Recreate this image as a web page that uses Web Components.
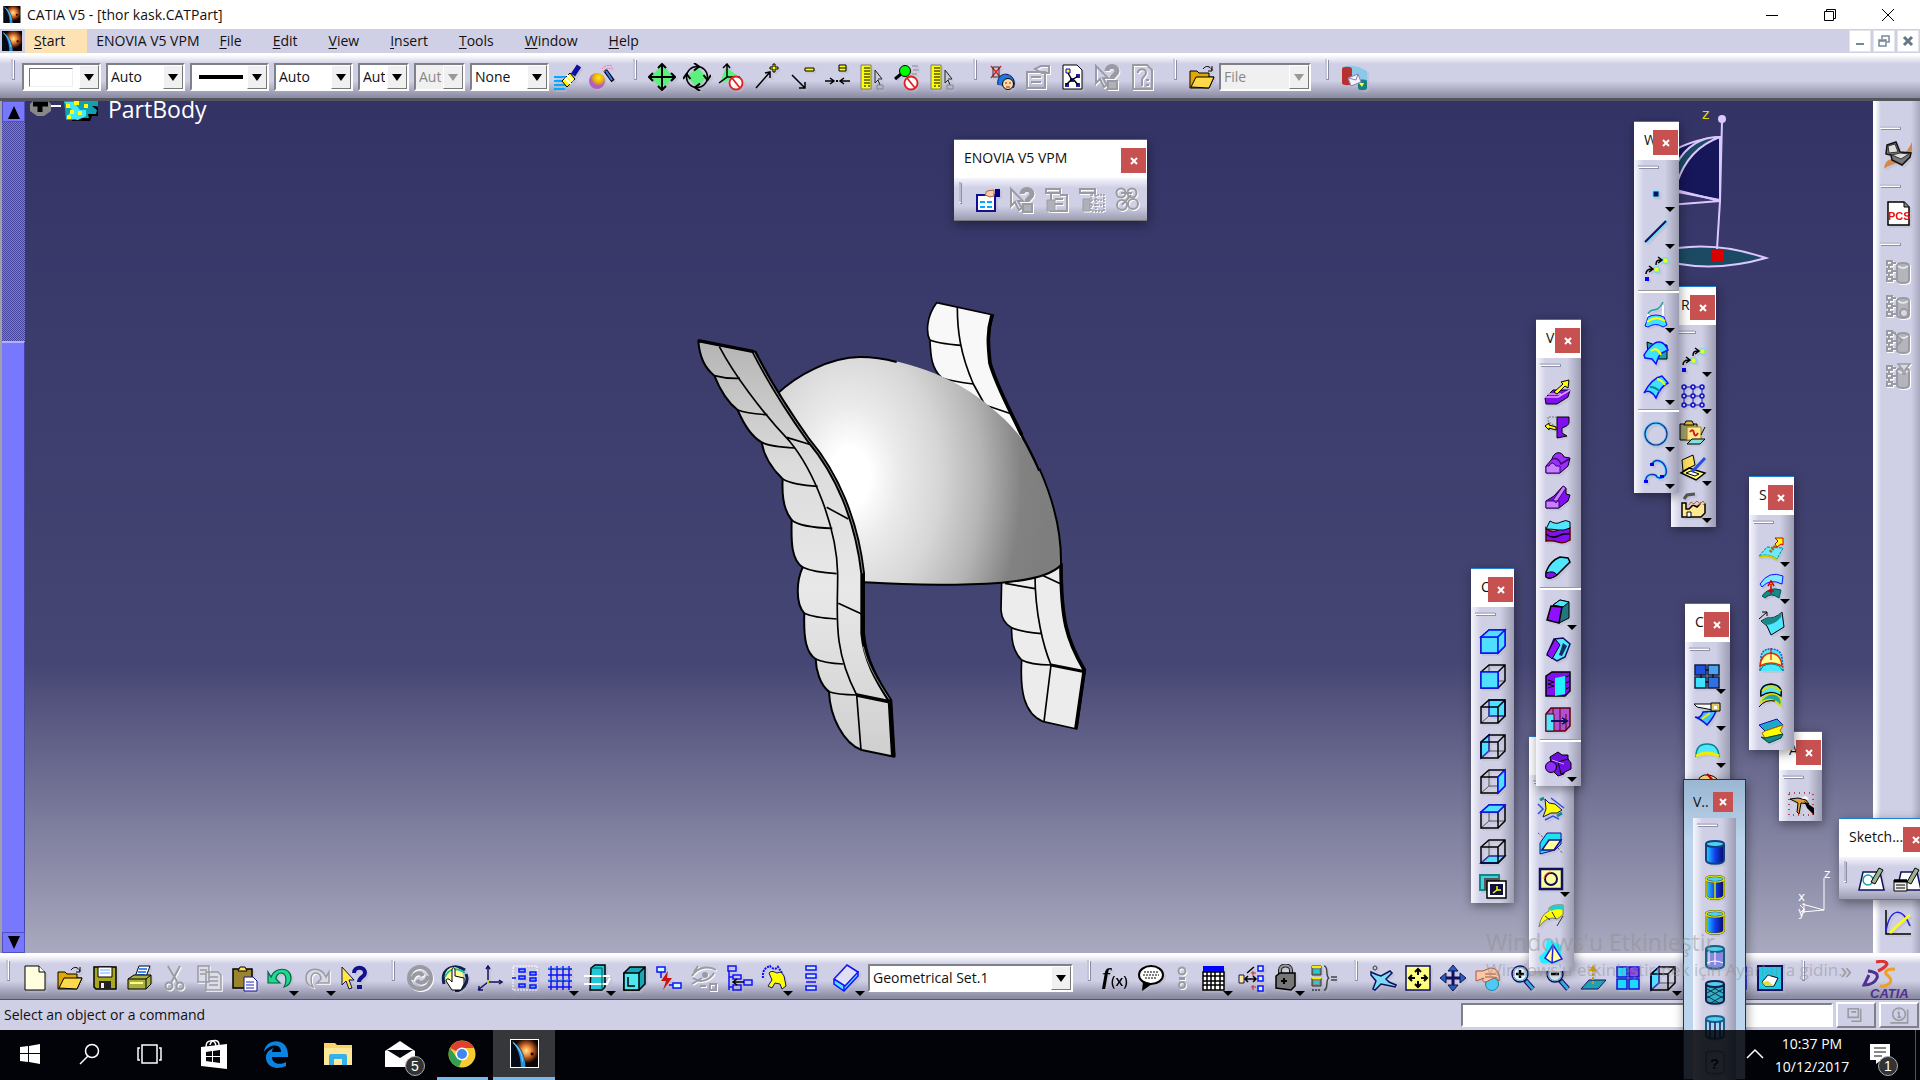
<!DOCTYPE html>
<html lang="en">
<head>
<meta charset="utf-8">
<title>CATIA V5 - [thor kask.CATPart]</title>
<style>
  html, body {
    margin: 0;
    height: 100%;
    overflow: hidden;
    background: #000;
    font: 14px/20px "Open Sans", "Noto Sans", sans-serif;
    color: #111;
  }
</style>
</head>
<body>
<cad-app></cad-app>

<script>
// ---------- Icons, all on a 28x28 grid ----------
const K = 'fill="none" stroke="#000" stroke-width="1.5"';
const B = 'stroke="#1010ff" stroke-width="1.5"';
const G = 'fill="none" stroke="#9a9aa2" stroke-width="2"';
const NO = '<circle cx="18" cy="20" r="6.5" fill="#fff" stroke="#e02020" stroke-width="1.8"/><path d="M14 15l8 10" stroke="#e02020" stroke-width="1.8"/>';

const FACES = {
  front: 'M2 10H19V26H2z',
  back: 'M10 3H26V19H10z',
  left: 'M2 10L10 3V19L2 26z',
  right: 'M19 10L26 3V19L19 26z',
  top: 'M2 10L10 3H26L19 10z',
  bottom: 'M2 26L10 19H26L19 26z',
};

function cube(...faces) {
  const wire = `<path d="M10 3V19H26M10 19L2 26" fill="none" stroke="#555"/><path d="M2 10H19V26H2zM2 10L10 3H26V19L19 26M19 10L26 3" ${K}/>`;
  const fills = faces.map(f => `<path d="${FACES[f]}" fill="#4fe0ff" ${B}/>`).join('');
  const hidden = ['back', 'left', 'bottom'].includes(faces[0]);
  return hidden ? fills + wire : wire + fills;
}

function cylinder(fill, line, extra = '') {
  return `<path d="M5 6V22C5 27 23 27 23 22V6" fill="${fill}" stroke="${line}" stroke-width="2"/>
    <ellipse cx="14" cy="6" rx="9" ry="3" fill="#4fd0f0" stroke="${line}" stroke-width="2"/>${extra}`;
}

const FOLDER = '<path d="M2 8H9L11 10H21V14H26L21 25H2z" fill="#e0a800" stroke="#000"/><path d="M3 24L8 14H26L21 25z" fill="#ffd94a" stroke="#000"/><path d="M15 6C18 2 22 3 24 7M24 3V8H20" fill="none" stroke="#000"/>';
const POINTS = `<path d="M3 23H7V27H3z" fill="#00f"/><path d="M12 13H17V18H12zM21 4H26V9H21z" fill="#ff0" stroke="#4fe0ff"/><path d="M4 20C4 16 6 15 10 15M7 12l4 3l-4 3M14 11C14 7 15 6 19 6M16 3l4 3l-4 3" fill="none" stroke="#000" stroke-width="1.5"/>`;
const RULER = '<path d="M3 2H13V26H3z" fill="#ff0" stroke="#777"/><path d="M6 5h6M6 8h6M6 11h6M6 14h6M6 17h6M6 20h6M6 23h2M10 23h2" stroke="#000"/><path d="M17 7V20L20 17L22 22M17 7L24 16H20" fill="none" stroke="#222"/><path d="M19 22h6v4h-6z" fill="none" stroke="#888"/>';
const LENS = '<path d="M16 16L24 25" stroke="#101060" stroke-width="5"/><path d="M17 17L24 25" stroke="#3ba8e0" stroke-width="3"/><circle cx="11" cy="10" r="8" fill="#e9fbff" stroke="#101060" stroke-width="1.5"/><circle cx="11" cy="10" r="6.5" fill="none" stroke="#5ad"/>';
const GEARTREE = `<path d="M3 4h5v4h-5zM3 12h5v4h-5zM3 20h5v4h-5zM8 6h4M8 14h4M8 22h4M5 8v4M5 16v4" ${G}/><path d="M13 9C13 5 25 5 25 9V23C25 27 13 27 13 23z" fill="#b4b4bc" stroke="#9a9aa2" stroke-width="2"/><path d="M14 9Q19 13 24 9" fill="none" stroke="#eee" stroke-width="1.5"/>`;

const ICONS = {
  brush: `<path d="M1 14H13M1 18H15M1 22H14M1 26H12" stroke="#0af" stroke-width="2"/><path d="M9 18L17 10L22 16L14 24z" fill="#ff0" stroke="#000"/><path d="M12 15l6 6M14 12l6 6" stroke="#fff" stroke-width="2"/><path d="M20 12L26 3" stroke="#1010a0" stroke-width="5"/>`,
  wand: `<circle cx="9" cy="18" r="8" fill="url(#orb)"/><path d="M17 7L25 18" stroke="#000" stroke-width="4"/><path d="M18 8L24 17" stroke="#4080ff" stroke-width="2"/><path d="M14 6Q18 1 25 3M16 9Q19 4 25 6" stroke="#f6a" stroke-dasharray="2 1" fill="none"/>`,
  move: `<path d="M14 2L26 14L14 26L2 14z" fill="#5cf07c"/><path d="M14 1V27M1 14H27M10 5L14 1L18 5M10 23L14 27L18 23M5 10L1 14L5 18M23 10L27 14L23 18" fill="none" stroke="#000" stroke-width="2"/>`,
  turn: `<path d="M14 4L24 14L14 24L4 14z" fill="#5cf07c"/><circle cx="14" cy="14" r="10.500" fill="none" stroke="#000" stroke-width="1.5"/><path d="M11 0l5 3.500l-5 4M17 28l-5-3.500l5-4M0 16l3.500-5l4 5M28 12l-3.500 5l-4-5" fill="none" stroke="#000" stroke-width="2"/>`,
  axisno: `<path d="M8 4L21 14L2 20z" fill="#5cf07c"/><path d="M9 1V14L1 20M9 14H22M5 5L9 1L12 5" ${K}/>${NO}`,
  plus: `<path d="M3 25L17 9M12 10l5-1l0 6" ${K}/><path d="M20 1h2v3h3v2h-3v3h-2v-3h-3v-2h3z" fill="#ff0" stroke="#000"/>`,
  minus: `<path d="M4 12L17 25M17 19v6h-6" ${K}/><path d="M17 5h9v3h-9z" fill="#ff0" stroke="#000"/>`,
  equal: `<path d="M2 18H11M7 15l4 3l-4 3M27 18H17M21 15l-4 3l4 3" ${K}/><path d="M13 17h2v2h-2z"/><path d="M16 2h7v6h-7z" fill="#ff0" stroke="#000"/><path d="M16 5h7" stroke="#000"/>`,
  ruler: RULER,
  lensno: `<path d="M2 16L8 11" stroke="#000" stroke-width="3"/><circle cx="12" cy="8" r="5.5" fill="#0f0" stroke="#000"/><path d="M19 3h6M20 7h6M19 11h5" stroke="#888"/>${NO}`,
  user: '<path d="M3 3L13 15M13 3L3 15" stroke="#e02020" stroke-width="1.5"/><path d="M5 4h6v10h-6z" fill="none" stroke="#333"/><path d="M10 22C8 12 18 8 24 14C27 18 27 22 25 25" fill="#1a7adf" stroke="#101060"/><circle cx="20" cy="21" r="5.5" fill="#ffd9a8" stroke="#000"/><path d="M18 19v2M22 19v2M18 24h4" stroke="#a02020"/>',
  props: `<path d="M4 9H22V25H4z" ${G}/><path d="M8 14H18M8 19H18M12 6L18 3H26V10H19z" ${G}/>`,
  propson: '<path d="M4 9H22V25H4z" fill="#fff" stroke="#101090" stroke-width="2"/><path d="M7 16h5M14 16h5M7 21h5M14 21h5" stroke="#0af" stroke-width="2"/><path d="M12 9L14 5L21 4V10L17 11z" fill="#fca" stroke="#a64"/><path d="M22 3h5v8h-5z" fill="#008"/>',
  docgraph: `<path d="M5 2H19L24 7V26H5z" fill="#fff" stroke="#000"/><path d="M8 6h4v4h-4z" fill="#ff0" stroke="#00f"/><path d="M12 15h4v4h-4zM18 11h4v4h-4zM18 20h4v4h-4zM7 20h4v4h-4z" fill="#22a"/><path d="M10 10L14 17L20 13M16 17L20 22M8 22L13 17" stroke="#000" stroke-width="1.5" fill="none"/>`,
  help: `<path d="M3 3V20L7 16L11 24L14 22L10 15H15z" ${G}/><path d="M14 8C14 2 24 2 24 8C24 12 19 12 19 16" fill="none" stroke="#9a9aa2" stroke-width="5"/><path d="M15 18h9v8h-9z" fill="#b0b0b8" stroke="#9a9aa2" stroke-width="2"/>`,
  docq: `<path d="M5 2H19L24 7V26H5z" ${G}/><path d="M10 10C10 5 18 5 18 10C18 13 14 14 14 17V23M18 17h3M18 22h3" ${G}/>`,
  folder: FOLDER,
  mail: '<path d="M2 4Q14 0 27 8V18H2z" fill="#8cc8e8"/><path d="M2 6C2 3 12 3 12 6V20C12 23 2 23 2 20z" fill="#b83030"/><path d="M18 18C18 16 27 16 27 18V25C27 28 18 28 18 25z" fill="#188080"/><path d="M8 15L18 11L21 19L11 23z" fill="#f4f4ff" stroke="#88a"/><path d="M8 15L16 17L18 11" fill="none" stroke="#88a"/><path d="M19 20h5l-2 4z" fill="#ff4"/>',
  docmgr: `<path d="M3 3H17V7H3zM8 7V25H24V9H17M12 13h8M12 18h8" ${G}/><path d="M4 14h8v11h-8z" fill="#b0b0b8" stroke="#9a9aa2"/>`,
  docset: `<path d="M2 3H17V7H2z" ${G}/><path d="M13 9H26V25H13zM13 14H26M13 19H26M18 9V25" fill="none" stroke="#9a9aa2" stroke-width="1.5" stroke-dasharray="2 1"/><path d="M5 13h7v12h-7z" fill="#b0b0b8" stroke="#9a9aa2"/>`,
  gears: `<circle cx="8" cy="7" r="4.5" ${G}/><circle cx="19" cy="7" r="4.5" ${G}/><circle cx="9" cy="19" r="5" ${G}/><circle cx="20" cy="18" r="5" ${G}/><path d="M8 7h11M9 19l9-10" ${G}/>`,

  new: '<path d="M4 2H18L24 8V26H4z" fill="#ffffe0" stroke="#000"/><path d="M18 2V8H24" fill="#fff" stroke="#000"/>',
  save: '<path d="M3 3H25V25H5L3 23z" fill="#a8a820" stroke="#000" stroke-width="1.5"/><path d="M7 3H21V13H7z" fill="#fff" stroke="#000"/><path d="M9 6h10M9 9h10" stroke="#6af"/><path d="M8 17H20V25H8z" fill="#222"/><path d="M10 19h3v5h-3z" fill="#eee"/>',
  print: '<path d="M9 13L13 2H24L20 13z" fill="#fff" stroke="#000"/><path d="M13 5h8M12 8h8M11 11h8" stroke="#06f" stroke-width="1.5"/><path d="M2 15L8 11H25V20L20 25H2z" fill="#a8b040" stroke="#000"/><path d="M2 15H20V25M20 15L25 11" fill="none" stroke="#000"/><path d="M4 19H17" stroke="#ff8" stroke-width="2"/>',
  cut: `<path d="M7 2L17 19M19 2L10 19" ${G}/><circle cx="8" cy="22" r="3.5" ${G}/><circle cx="19" cy="22" r="3.5" ${G}/>`,
  copy: `<path d="M2 2H13V18H2zM10 8H22L25 11V26H10z" fill="#dcdcea" stroke="#9a9aa2" stroke-width="1.5"/><path d="M4 6h7M4 10h5M13 13h9M13 17h9M13 21h9" stroke="#9a9aa2" stroke-width="1.5"/>`,
  paste: '<path d="M2 5H21V24H2z" fill="#9a8430" stroke="#000" stroke-width="1.5"/><path d="M7 7L9 3H14L16 7z" fill="#ffe060" stroke="#000"/><path d="M13 13H22L26 17V27H13z" fill="#fff" stroke="#101090"/><path d="M15 18h8M15 21h8M15 24h8" stroke="#22c"/>',
  undo: '<path d="M5 13C8 3 25 2 25 14C25 19 22 22 18 23C21 18 21 9 15 9C12 9 10 12 10 15L14 19H2V8z" fill="#20d890" stroke="#064" stroke-width="1.2"/>',
  redo: `<path d="M23 13C20 3 3 2 3 14C3 19 6 22 10 23C7 18 7 9 13 9C16 9 18 12 18 15L14 19H26V8z" fill="#d8d8e6" stroke="#9a9aa2" stroke-width="1.5"/>`,
  what: '<path d="M2 3V21L6 17L9 25L12 24L9 16H14z" fill="#ffe840" stroke="#101060"/><path d="M14 9C14 2 25 2 25 9C25 13 19 13 19 18" fill="none" stroke="#101090" stroke-width="4"/><path d="M17 21h5v4h-5z" fill="#101090"/>',
  update: `<circle cx="14" cy="14" r="11" fill="none" stroke="#9a9aa2" stroke-width="4"/><path d="M6 16C8 8 15 8 17 12M22 12C20 20 13 20 11 16" fill="none" stroke="#9a9aa2" stroke-width="4"/>`,
  hand: '<path d="M3 20C-1 4 14 -1 24 6M25 10C29 20 20 27 14 27" fill="none" stroke="#102050" stroke-width="3"/><circle cx="13" cy="12" r="9" fill="#ffff90"/><path d="M4 13C8 4 16 3 24 9" fill="none" stroke="#20c0a0" stroke-width="2"/><path d="M11 17V6C11 3 14 3 14 6V12L23 14V20L20 26H11L5 17C5 14 8 14 11 18z" fill="#fff" stroke="#000"/>',
  axis: '<path d="M12 2V18H26M12 18L2 26" fill="none" stroke="#101060" stroke-width="1.5"/><path d="M10 5l2-3l2 3M23 16l3 2l-3 2M3 22v4h4" fill="none" stroke="#101060" stroke-width="1.5"/><path d="M12 16v4" stroke="#cc3" stroke-width="2"/>',
  tree: `<path d="M2 2H26V26H2z" fill="none" stroke="#fff" stroke-dasharray="2 1"/><path d="M8 5h6v3h-6zM19 8h6v3h-6zM8 12h6v3h-6zM19 14h6v3h-6zM8 20h6v3h-6zM19 21h6v3h-6zM1 14h4" fill="#5ab8ff" ${B}/>`,
  grid: `<path d="M2 5H26M2 11H26M2 17H26M2 23H26M5 2V26M11 2V26M17 2V26M23 2V26" ${B}/><path d="M2 4H26M2 16H26" stroke="#2ab" stroke-dasharray="3 3"/>`,
  plane: '<path d="M8 4L12 1H22V23L19 26H7z" fill="#20c8d8" stroke="#000" stroke-width="1.5"/><path d="M1 12H27M1 20H24L27 14" fill="none" stroke="#fff" stroke-width="2"/><path d="M8 4H19V26" fill="none" stroke="#055"/>',
  block: '<path d="M4 9L10 3H25V20L19 26H4z" fill="#18a8b8" stroke="#000" stroke-width="1.5"/><path d="M4 9H19V26H4z" fill="#50e8f0" stroke="#000" stroke-width="1.5"/><path d="M19 9L25 3M8 13V22H15" fill="none" stroke="#000" stroke-width="1.5"/>',
  bolt: `<path d="M2 3h8v5h-8zM18 19h8v5h-8z" fill="#cff" ${B}/><path d="M6 8V14M14 21h4" ${B}/><path d="M13 7L6 17H11L8 26L17 14H12z" fill="#d01010"/>`,
  eye: `<path d="M2 12C8 2 20 2 26 6M3 14C10 20 20 16 24 9M4 8L8 2M2 20L12 14M10 22h6M20 20h6v6h-6z" ${G}/><circle cx="15" cy="11" r="3" fill="#9a9aa2"/>`,
  treeleft: `<path d="M3 2h8v5h-8zM8 11h8v4h-8zM19 16h8v5h-8zM8 21h8v5h-8zM4 7V26M4 13h4M4 23h4" fill="none" ${B}/><path d="M19 18H8M12 15l-4 3l4 3" ${K}/>`,
  body: `<path d="M3 14C2 4 8 3 10 2C13 6 17 5 18 3L22 9" fill="none" stroke="#1010ff" stroke-dasharray="2 1" stroke-width="2"/><path d="M9 9C12 6 14 8 17 9L21 8L24 12L26 22L22 25L20 20L15 19L12 24L8 22L12 16z" fill="#ff0" stroke="#101060"/>`,
  stack: `<path d="M9 2h10v4h-10zM9 10h10v4h-10zM9 22h10v4h-10z" fill="#c8f0ff" ${B}/><path d="M9 18h10" ${B}/>`,
  sheets: `<path d="M2 16V20L12 27L26 12V8z" fill="#5ae0ff" ${B}/><path d="M2 15L15 1L26 8L13 22z" fill="#e0e0f4" ${B}/><path d="M12 22V27" ${B}/>`,
  fx: '<text x="0" y="20" font-family="Liberation Serif" font-style="italic" font-weight="bold" font-size="24">f</text><text x="9" y="22" font-family="Open Sans" font-weight="600" font-size="14">(x)</text>',
  talk: '<ellipse cx="14" cy="11" rx="12" ry="9" fill="#fff" stroke="#000" stroke-width="2"/><path d="M6 17L5 27L15 20" fill="#000"/><path d="M7 8h14M6 11h16M8 14h12" stroke="#000" stroke-dasharray="2 1"/>',
  knot: `<circle cx="14" cy="7" r="3.500" ${G}/><circle cx="14" cy="21" r="3" ${G}/><path d="M11 13h6v3h-6z" fill="#9a9aa2"/>`,
  table: '<path d="M3 2H24V8H3z" fill="#00f"/><path d="M3 8H24V26H3z" fill="#fff"/><path d="M3 8H24V26H3zM3 12H24M3 17H24M3 21H24M7 8V26M11 8V26M15 8V26M20 8V26" fill="none" stroke="#000" stroke-width="1.5"/>',
  relate: `<path d="M2 11h5v8h-5z" fill="#ffe890" stroke="#101060"/><path d="M8 15H19M11 12l-3 3l3 3M16 12l3 3l-3 3M10 9L17 3" ${K}/><path d="M21 2h5v5h-5zM21 12h5v5h-5zM21 22h5v5h-5z" fill="#cff" ${B}/><path d="M14 9h5M16 7v5M14 23h5M16 21v5" stroke="#e02020"/>`,
  lock: '<path d="M8 12V6C8 0 19 0 19 6V12" fill="none" stroke="#222" stroke-width="4"/><path d="M8 12V6C8 0 19 0 19 6V12" fill="none" stroke="#999" stroke-width="2"/><path d="M4 12L8 9H23V22L19 26L4 24z" fill="#777" stroke="#000" stroke-width="1.5"/><path d="M12 14v6M9 17h6" stroke="#000" stroke-width="2"/>',
  equiv: '<path d="M3 2h9v9h-9zM3 14h9v8h-9z" fill="#888" stroke="#333"/><path d="M5 6h5v3h-5zM5 17h5v3h-5z" fill="#20d0d0"/><path d="M3 3h9M3 14h9" stroke="#ee0" stroke-width="2"/><path d="M3 26h8" stroke="#000" stroke-dasharray="2 1"/><path d="M15 2C20 2 16 13 20 14C16 15 20 26 15 26M22 13h6M22 16h6" fill="none" stroke="#444" stroke-width="1.5"/>',
  fly: '<path d="M2 8Q8 11 12 12L21 7L23 9L17 15L20 18L27 21L26 23L17 21L12 20L6 26L4 25L7 17L2 11z" fill="#7cdcf4" stroke="#101060" stroke-width="1.5"/><circle cx="6" cy="4" r="2" fill="none" stroke="#333"/>',
  fit: '<path d="M2 2H26V26H2z" fill="#ffff80" stroke="#101060" stroke-width="1.5"/><path d="M14 5V11M14 17V23M5 14H11M17 14H23M11 8l3-3l3 3M11 20l3 3l3-3M8 11l-3 3l3 3M20 11l3 3l-3 3" stroke="#000" stroke-width="2" fill="none"/>',
  pan: '<path d="M14 4V24M4 14H24" stroke="#101060" stroke-width="3"/><path d="M9 7L14 1L19 7zM9 21L14 27L19 21zM7 9L1 14L7 19zM21 9L27 14L21 19z" fill="#2b5eb8" stroke="#101060"/>',
  spin: '<circle cx="18" cy="20" r="6.5" fill="#50c8f8" stroke="#18a"/><path d="M2 7H9L16 4C24 4 26 10 25 17L22 13L12 18C8 18 8 16 10 14L2 17z" fill="#f8c8a8" stroke="#a54"/><path d="M11 10h11M11 13h9" stroke="#a54"/>',
  zoomin: LENS + '<path d="M7 10H15M11 6V14" stroke="#000" stroke-width="2.5"/>',
  zoomout: LENS + '<path d="M7 10H15" stroke="#000" stroke-width="2.5"/>',
  normal: '<path d="M2 25L10 16H27L19 25z" fill="#20a0b0" stroke="#101060"/><path d="M14 20V5" stroke="#c90" stroke-width="2" stroke-dasharray="3 1"/><path d="M10 7L14 1L18 7z" fill="#c90"/>',
  quad: '<path d="M3 3H13V13H3zM3 15H13V25H3zM15 15H25V25H15z" fill="#20d8ff" stroke="#1010d0" stroke-width="1.5"/><path d="M15 3H25V13H15z" fill="#8040e0" stroke="#1010d0" stroke-width="1.5"/>',
  iso: cube('left'),
  picture: '<path d="M2 2H26V26H2z" fill="#20c8e8" stroke="#101060" stroke-width="2"/><path d="M6 18L12 11L22 14L18 22H9z" fill="#fff" stroke="#000"/><path d="M6 18L12 17L18 22H9z" fill="#dd4"/>',

  pt: '<path d="M11 11h6v6h-6z" fill="#101060" stroke="#4fe0ff"/>',
  line: '<path d="M4 25L25 4" stroke="#4fe0ff" stroke-width="3"/><path d="M3 25L24 4" stroke="#101060" stroke-width="2"/>',
  points: POINTS,
  sweep: '<path d="M6 13C9 5 15 14 21 1" fill="none" stroke="#20a0a0" stroke-width="1.5"/><path d="M6 13v8M21 4v12" stroke="#fff" stroke-width="2"/><path d="M3 25L6 16Q14 12 22 16L25 24L21 26Q14 21 6 26z" fill="#40e0ff" stroke="#1010ff"/><path d="M5 21Q14 14 23 20" stroke="#ff0" stroke-width="2" fill="none"/>',
  trimsurf: '<path d="M5 4L13 7H25V21H17L6 18z" fill="#20a0a8" stroke="#000"/><path d="M2 17Q6 10 13 5Q21 1 26 12L20 15Q17 16 14 26L10 21L3 20z" fill="#40e0ff" stroke="#1010ff" stroke-width="1.5"/><path d="M9 13Q15 8 19 17" stroke="#ff0" stroke-width="2" fill="none"/>',
  loftsurf: '<path d="M2 20Q10 5 20 3L26 10Q18 14 14 25Q8 15 2 20z" fill="#40e0ff" stroke="#1010ff" stroke-width="1.5"/><path d="M8 14Q14 14 18 19" stroke="#188" stroke-width="2" fill="none"/><path d="M15 6Q20 7 23 12" stroke="#ff0" stroke-width="2" fill="none"/>',
  circle: '<circle cx="14" cy="14" r="11" fill="none" stroke="#6cf" stroke-width="3"/><circle cx="14" cy="14" r="11" fill="none" stroke="#203080" stroke-width="1.2"/>',
  spline: '<path d="M4 25C2 16 14 16 15 20C18 22 26 20 24 12C22 4 14 0 9 8" fill="none" stroke="#4fe0ff" stroke-width="3"/><path d="M4 25C2 16 14 16 15 20C18 22 26 20 24 12C22 4 14 0 9 8" fill="none" stroke="#2030c0" stroke-width="1.5"/><path d="M2 23h4v3h-4zM8 6h4v3h-4zM18 18h4v3h-4z" fill="#00f"/>',
  pattern: `<path d="M3 5H25M3 14H25M3 23H25M5 3V25M14 3V25M23 3V25" stroke="#1010c0"/><g fill="#ccf" stroke="#1010c0" stroke-width="1.5"><circle cx="5" cy="5" r="2"/><circle cx="14" cy="5" r="2"/><circle cx="23" cy="5" r="2"/><circle cx="5" cy="14" r="2"/><circle cx="14" cy="14" r="2"/><circle cx="23" cy="14" r="2"/><circle cx="5" cy="23" r="2"/><circle cx="14" cy="23" r="2"/><circle cx="23" cy="23" r="2"/></g>`,
  catalog: '<path d="M1 5H18V21H1z" fill="#a0a070" stroke="#000"/><path d="M5 6L7 2H13L15 6z" fill="#e0c040" stroke="#000"/><path d="M8 8H22V21H8z" fill="#ffe890" stroke="#a80"/><path d="M11 13Q14 9 15 14T19 14" stroke="#d02020" stroke-width="2" fill="none"/><path d="M8 25L13 20H26L21 25zM22 16L26 8" fill="#80e0e0" stroke="#000"/>',
  mould: '<path d="M3 6L14 1L16 11L4 17z" fill="#ffe060" stroke="#000"/><path d="M2 19L10 14L26 19L17 26z" fill="#ffff70" stroke="#000" stroke-width="1.5"/><path d="M7 19L12 17L20 20L16 22z" fill="#fff" stroke="#000"/><path d="M13 18L26 4" stroke="#2050e0" stroke-width="3"/>',
  factory: '<path d="M3 26V12H7V18H10L14 14L18 16L22 12L26 13V22L22 26z" fill="#ffe890" stroke="#000" stroke-width="1.5"/><path d="M10 14L12 11L15 13L18 10L21 13L24 10L26 13" fill="#fca" stroke="#a64"/><path d="M5 8L8 4L16 3" stroke="#555" stroke-width="3" fill="none"/><path d="M8 21h4v5h-4z" fill="#fff" stroke="#000"/>',

  pad: '<path d="M1 20L9 12H26L24 19L13 26H2z" fill="#8010f0" stroke="#000"/><path d="M1 19H14L26 12M3 16H17" fill="none" stroke="#e0a0ff" stroke-width="1.5"/><path d="M10 14L19 6L17 4L25 2L24 10L21 8L13 16z" fill="#ff0" stroke="#000"/>',
  shaft: '<path d="M13 4H25V9C25 13 20 14 18 15V20L23 23L13 25z" fill="#8010f0" stroke="#000"/><path d="M13 4H4V8L12 14" fill="none" stroke="#777" stroke-dasharray="2 1"/><path d="M1 13L5 10V12L12 14V17L5 15V17z" fill="#ff0" stroke="#000"/>',
  rib: '<path d="M2 18L8 11C10 3 18 3 20 9L26 10L24 18L16 25H2z" fill="#9a30f8" stroke="#000"/><path d="M2 18H5Q8 12 12 18H16V25H2z" fill="#c880ff" stroke="#400080"/><path d="M8 11Q14 9 17 16L25 11" fill="none" stroke="#400080" stroke-width="1.5"/>',
  stiff: '<path d="M2 18L10 13L19 3L22 5V11L26 12L24 18L15 25H2z" fill="#8010f0" stroke="#000"/><path d="M2 18H15V25H2zM9 17L19 3L22 5L12 20z" fill="#c880ff" stroke="#400080"/>',
  thick: '<path d="M2 10Q8 16 14 12T26 10V22Q20 26 14 24T2 23z" fill="#8010f0" stroke="#600000" stroke-width="1.5"/><path d="M2 16Q8 21 14 18T26 16" fill="none" stroke="#000" stroke-width="1.5"/><path d="M2 11L6 3Q12 7 17 4T26 4V10Q20 13 14 12T2 11z" fill="#4fe6ff" stroke="#000"/>',
  closesurf: '<path d="M2 19Q6 8 16 4L24 5L26 9L13 22Q6 27 2 24z" fill="#4fe6ff" stroke="#000" stroke-width="1.5"/><path d="M2 20Q10 17 13 22Q6 27 2 24z" fill="#8010f0" stroke="#000"/>',
  draft: '<path d="M9 7L16 2L25 4V20L15 25z" fill="#207880" stroke="#000"/><path d="M9 7L16 2L25 4L19 9z" fill="#4fe6ff" stroke="#000"/><path d="M7 8L18 9L15 25L3 22z" fill="#9010ff" stroke="#000" stroke-width="1.5"/>',
  shell: '<path d="M10 4L19 3L26 9L21 22L13 26L3 20z" fill="#4fe6ff" stroke="#101060" stroke-width="1.5"/><path d="M3 19L11 4L16 10L8 24z" fill="#9010ff" stroke="#000"/><path d="M15 20L19 8L23 11L18 21z" fill="#103060"/>',
  thickness: '<path d="M2 6L8 2H26V21L21 26H2z" fill="#8010f0" stroke="#000" stroke-width="1.5"/><path d="M11 8L21 6V24L11 26z" fill="#20f0ff"/><path d="M4 10l6 2l-6 2l6 2l-6 2M22 7l4-2M22 13l4-2M22 19l4-2" stroke="#000" fill="none"/>',
  mirror: '<path d="M2 9L7 3H26V21L21 26H2z" fill="#b050d8" stroke="#600000" stroke-width="1.5"/><path d="M2 9H10V26H2z" fill="#4fe6ff" stroke="#600000"/><path d="M9 9V3M16 9V3M16 9V26M22 9V26" stroke="#600000"/><path d="M7 16H22M18 13l5 3l-5 3" stroke="#101060" stroke-width="2" fill="#fff"/>',
  bool: '<path d="M6 7L14 2L18 5H24V12L20 15V24L14 26L8 20z" fill="#7010e0" stroke="#000"/><circle cx="7" cy="17" r="5.5" fill="#9030ff" stroke="#000"/><path d="M14 12L24 9L27 13V19L17 24z" fill="#7010e0" stroke="#000"/><path d="M8 10L20 14" stroke="#d0a0ff"/>',

  views: '<path d="M1 3H20V18H1z" fill="#40d0e0" stroke="#188" stroke-width="2"/><path d="M5 6H20V18H5z" fill="#555"/><path d="M8 9H27V26H8z" fill="#fff" stroke="#000" stroke-width="1.5"/><path d="M11 12H24V23H11z" fill="#101040"/><path d="M18 14v4h4M18 18l-4 3" stroke="#ff0" stroke-width="1.5" fill="none"/>',
  starsurf: '<path d="M8 4L12 8L18 9L25 15L20 18H14L6 22L9 14z" fill="#ff0" stroke="#101060"/><path d="M1 9L6 14L1 19M14 3L27 13M8 25L16 21L22 24" stroke="#3050e0" stroke-width="1.5" fill="none"/><path d="M3 5L7 3M20 21L25 18" stroke="#188888" stroke-width="3"/>',
  boxsurf: '<path d="M10 3L24 3V14L18 20L3 24V13z" fill="#20e0f0" stroke="#101090"/><path d="M5 20L12 10H24L17 20z" fill="#ffffa0" stroke="#101090" stroke-width="1.5"/><path d="M1 3l6 5M21 18l5 6" stroke="#555" stroke-dasharray="2 2"/>',
  sketchpad: '<path d="M3 4H25V24H3z" fill="#ffffa0" stroke="#101060" stroke-width="2.5"/><circle cx="14" cy="14" r="6" fill="none" stroke="#101060" stroke-width="2"/><path d="M7 14A7 7 0 0 1 14 7" stroke="#f60" fill="none"/>',
  yellowsurf: '<path d="M12 6Q16 2 26 3V13L20 17Q10 13 2 25Q4 12 12 9z" fill="#ff0" stroke="#777"/><path d="M12 6Q18 2 26 3V8Q20 6 14 9z" fill="#20d0d0"/><path d="M15 10L19 17M8 14l5 4M20 24l6-10" stroke="#333"/>',
  facet: '<path d="M10 2L24 8V20L20 26H4L2 20L8 14z" fill="#20f0ff"/><path d="M8 21L16 8L25 22L15 26z" fill="#ffffa0" stroke="#2020e0" stroke-width="1.5"/><path d="M16 8L15 26" stroke="#2020e0" stroke-width="1.5"/>',

  extrude: '<path d="M2 21L10 12L26 13L20 24Q12 18 2 21z" fill="#70e8f8" stroke="#088" stroke-dasharray="3 1"/><path d="M2 22Q12 19 20 25" fill="none" stroke="#cc0" stroke-width="2"/><path d="M13 17L20 9" stroke="#a60" stroke-width="3" stroke-dasharray="2 1"/><path d="M18 3H26V10L24 9L20 12L18 9L21 6z" fill="#ff0" stroke="#c00"/>',
  offset: '<path d="M3 12Q12 -2 26 4L25 12Q13 6 5 15z" fill="#80e8ff" stroke="#1010ff"/><path d="M5 24Q12 14 24 18L22 26Q14 20 8 26z" fill="#188888" stroke="#055"/><path d="M14 22V12M11 14l3-5l3 5M11 19h6" stroke="#c00" stroke-width="1.5" fill="#ff0"/>',
  sweep2: '<path d="M2 10L10 3M5 3h5v4" stroke="#000" fill="none"/><path d="M4 12L10 9Q18 10 25 3L27 18L14 26L10 17z" fill="#4fe6ff" stroke="#000"/><path d="M4 12L10 9Q18 10 25 3L24 8Q18 16 9 16z" fill="#188888"/>',
  fill: '<path d="M4 12Q4 3 14 3T25 12L26 24H3z" fill="#4fe6ff" stroke="#1060c0" stroke-dasharray="2 1" stroke-width="1.5"/><path d="M3 20Q4 8 14 7Q24 8 25 20Q14 14 3 20z" fill="#ffff90" stroke="#e03000" stroke-width="1.5"/><path d="M14 2v12" stroke="#c00"/><path d="M3 25L6 20Q14 16 22 20L26 25" fill="#4fe6ff" stroke="#088"/>',
  multi: '<path d="M4 15Q2 4 14 3Q26 4 24 15Q14 8 4 15z" fill="#4fe6ff" stroke="#000" stroke-width="1.5"/><path d="M5 10Q14 2 24 10" stroke="#dd0" stroke-width="2" fill="none"/><path d="M3 22Q8 12 17 13Q26 15 24 25Q14 14 3 22z" fill="#20a8a8" stroke="#dd0" stroke-width="1.5"/><path d="M2 26Q8 18 18 20" stroke="#000" fill="none"/>',
  blend: '<path d="M2 9L20 3L26 9L8 15z" fill="#20a8c8" stroke="#1010a0"/><path d="M8 15L26 9L23 15L26 18L8 22L5 17z" fill="#ff0" stroke="#a60"/><path d="M4 21L8 22L26 18L24 22L12 27z" fill="#188888" stroke="#044"/>',
  puzzle: '<path d="M2 3H13V13H2z" fill="#2050e0"/><path d="M15 3H26V13H15z" fill="#50a0f0"/><path d="M2 15H13V26H2z" fill="#40e0ff"/><path d="M15 15H26V26H15z" fill="#3070e0"/><path d="M2 3H13V13H2zM15 3H26V13H15zM2 15H13V26H2zM15 15H26V26H15z" fill="none" stroke="#102040" stroke-width="1.5"/><path d="M12 8h4M8 12v4M20 12v4M12 20h4" stroke="#102040" stroke-width="2"/>',
  saw: '<path d="M2 18Q8 20 10 13L23 12Q21 18 14 26Q8 20 2 18z" fill="#40c0ff" stroke="#1010d0" stroke-width="1.5"/><path d="M9 20L17 14" stroke="#ee0" stroke-width="2"/><path d="M1 5H20V11L4 8z" fill="#fff" stroke="#000"/><path d="M18 4H27V12H18z" fill="#e0c860" stroke="#000"/><path d="M21 7h3v3h-3z" fill="#fff"/>',
  edge: '<path d="M3 20Q3 8 14 8T26 20Q14 14 3 20z" fill="#4fe6ff" stroke="#088" stroke-width="1.5"/><path d="M3 20Q14 14 26 20" stroke="#ee0" stroke-width="3" fill="none"/>',
  dome: '<path d="M3 14Q5 0 16 2T26 14z" fill="#ffe080" stroke="#000"/><path d="M14 1L26 14" stroke="#c00" stroke-width="2"/>',
  analyse: '<path d="M2 3H26V25H2z" fill="none" stroke="#c04040" stroke-width="2" stroke-dasharray="1 4"/><path d="M3 9L11 8L19 10L22 14L14 13L12 24L10 22L11 13z" stroke="#000" fill="#dca040"/><path d="M17 11L27 18V25L20 18z" fill="#000"/><path d="M14 8l5-2l3 4" fill="#fff"/>',
  sketch: '<path d="M5 7H22L26 25H1z" fill="#fff" stroke="#101060" stroke-width="1.5"/><circle cx="10" cy="15" r="5" fill="none" stroke="#18a0a0" stroke-width="1.5"/><path d="M13 17L21 3L25 5L17 19z" fill="#9ab090" stroke="#000"/>',
  sketchpos: '<path d="M8 7H24L28 25H4z" fill="#fff" stroke="#101060" stroke-width="1.5"/><path d="M14 17L22 3L26 5L18 19z" fill="#9ab090" stroke="#000"/><path d="M1 15H14V26H1z" fill="#eee" stroke="#000"/><path d="M1 16h13" stroke="#000" stroke-width="3"/><path d="M3 20h9M3 23h9" stroke="#000"/>',

  robot: '<path d="M0 28Q1 17 10 18T28 1Q30 18 17 21T0 28z" fill="#d08850"/><path d="M3 4L12 1L16 11L27 12L26 16L18 24L8 19L7 14L2 13z" fill="#777" stroke="#111" stroke-width="1.5"/><path d="M4 5L11 3L14 11L5 12zM8 14L16 12L25 13L17 18z" fill="#ddd" stroke="#333"/>',
  pcs: '<path d="M4 3H20L25 8V26H4z" fill="#fff" stroke="#000" stroke-width="1.5"/><path d="M20 3V8H25" fill="#888" stroke="#000"/><text x="4" y="21" font-size="11" font-weight="bold" fill="#e81010" font-family="Liberation Sans">PCS</text>',
  geara: GEARTREE,
  gearb: GEARTREE + `<circle cx="20" cy="21" r="4" fill="#d8d8e6" stroke="#9a9aa2" stroke-width="2"/>`,
  gearc: GEARTREE + `<path d="M8 4L18 13L12 20" ${G}/>`,
  geard: GEARTREE + `<path d="M14 2H26L21 8V12H19V8z" fill="#d8d8e6" stroke="#9a9aa2" stroke-width="1.5"/>`,
  curve: '<path d="M2 2V26H27" fill="none" stroke="#000" stroke-width="1.5"/><path d="M2 23C6 0 18 -2 26 18" fill="none" stroke="#2020e0" stroke-width="1.5"/><path d="M6 25L14 17L26 7" fill="none" stroke="#ff0" stroke-width="2.5"/>',
  screen: `<path d="M4 6H17V17H4zM8 10h6M20 6V22H8" fill="none" stroke="#9a9aa2" stroke-width="2"/>`,
  info: `<circle cx="14" cy="13" r="8" ${G}/><path d="M12 11h2v6M12 17h5M14 7v1M3 24H25V7" ${G}/>`,
  cyl: cylinder('url(#shade)', '#104080'),
  cyledge: cylinder('url(#shade)', '#101040', '<path d="M5 6V22C5 27 23 27 23 22V6M14 9V25" fill="none" stroke="#dd0" stroke-width="1.5"/><ellipse cx="14" cy="6" rx="9" ry="3" fill="none" stroke="#dd0" stroke-width="1.5"/>'),
  cyltop: cylinder('url(#shade)', '#101040', '<path d="M5 6V22C5 27 23 27 23 22V6" fill="none" stroke="#dd0" stroke-width="1.5"/><ellipse cx="14" cy="6" rx="9" ry="3" fill="none" stroke="#dd0" stroke-width="1.5"/>'),
  cylmat: cylinder('#8888e0', '#186080', '<path d="M8 8V22M14 9V22M6 20Q14 16 22 20" fill="none" stroke="#fff"/>'),
  cylmesh: cylinder('#30b0c0', '#102050', '<path d="M6 11L22 20M6 18L18 25M11 9L22 15M22 11L6 20M22 18L10 25M17 9L6 15" stroke="#103050" fill="none"/>'),
  cylwire: cylinder('#a8d8f0', '#186090', '<path d="M9 9V24M14 9V25M19 9V24" stroke="#102060" stroke-width="1.5"/>'),
  cylask: '<path d="M5 6V22C5 27 23 27 23 22V6C23 2 5 2 5 6z" fill="none" stroke="#888" stroke-width="1.5"/><text x="9" y="21" font-size="15" font-weight="bold" font-family="Liberation Sans" fill="#111">?</text>',
};
for (const face of Object.keys(FACES)) ICONS['cube-' + face] = cube(face);
ICONS['cube-iso'] = cube('front', 'top', 'right');

const GRADIENTS = `<defs>
  <radialGradient id="orb" cx=".6" cy=".3"><stop offset="0" stop-color="#ffe820"/><stop offset=".6" stop-color="#e8b000"/><stop offset="1" stop-color="#b060c0"/></radialGradient>
  <linearGradient id="shade"><stop offset="0" stop-color="#20d8ff"/><stop offset=".5" stop-color="#1040f0"/><stop offset="1" stop-color="#080860"/></linearGradient>
</defs>`;

function svg(name, size = 28) {
  return `<svg viewBox="0 0 28 28" width="${size}" height="${size}" aria-hidden="true">${GRADIENTS}${ICONS[name]}</svg>`;
}

const APP_ICON = `<svg viewBox="0 0 30 30" width="100%" height="100%" aria-hidden="true" style="display:block">
  <defs><radialGradient id="sun" gradientUnits="userSpaceOnUse" cx="17" cy="12" r="14"><stop offset="0" stop-color="#ffe890"/><stop offset=".35" stop-color="#f09040"/><stop offset=".7" stop-color="#8a3c14"/><stop offset="1" stop-color="#0c0504"/></radialGradient></defs>
  <path d="M0 0H30V30H0z" fill="url(#sun)"/>
  <path d="M0 0C10 6 16 16 16 30H0z" fill="#050a14"/>
  <path d="M1 1C11 7 16 18 16 30H11C11 18 7 8 1 1z" fill="#2a90d8"/>
  <path d="M2 3C10 9 12 16 13 24" fill="none" stroke="#8fd8ff"/>
  <path d="M22 14h3v3h-3z" fill="#200"/>
</svg>`;

// "name" is a tool, "name>" has a fly-out, "name!" is disabled, "name~" is narrow,
// "|" is a handle, "-" is a rule
function tools(spec) {
  return spec.split(' ').map(token => {
    if (token === '|') return '<tool-handle></tool-handle>';
    if (token === '-') return '<tool-rule></tool-rule>';
    const name = token.replace(/[>!~]/g, '');
    const arrow = token.includes('>') ? ' arrow' : '';
    const off = token.includes('!') ? ' disabled' : '';
    const narrow = token.includes('~') ? ' narrow' : '';
    return `<tool-button icon="${name}"${arrow}${off}${narrow}></tool-button>`;
  }).join('');
}

class Part extends HTMLElement {
  connectedCallback() {
    if (this.shadowRoot) return;
    this.attachShadow({ mode: 'open' });
    this.shadowRoot.innerHTML = this.template();
  }
}

class ToolButton extends Part {
  template() {
    return `
      <style>
        :host { display: grid; flex: none; grid-template: 35px / 35px; position: relative; width: 35px; height: 35px; }
        :host([arrow]) { width: 37px; height: 37px; }
        :host([narrow]) { grid-template-columns: 28px; width: 28px; }
        button { display: grid; place-items: center; padding: 0; border: 0; background: none; }
        svg { filter: drop-shadow(2px 2px 0 #b9b9cc88); }
        button:disabled svg { filter: drop-shadow(1px 1px 0 #fff); }
        .fly { position: absolute; right: 0; bottom: 1px; border: 5px solid transparent; border-top-color: #000; border-bottom: 0; }
      </style>
      <button aria-label="${this.getAttribute('icon')}" ${this.hasAttribute('disabled') ? 'disabled' : ''}>${svg(this.getAttribute('icon'))}</button>
      ${this.hasAttribute('arrow') ? '<span class="fly"></span>' : ''}`;
  }
}

class ToolHandle extends Part {
  template() {
    return `
      <style>
        :host { display: block; flex: none; width: 25px; }
        i { display: block; width: 2px; height: 20px; margin-left: 14px; border: solid #fff; border-width: 0 1px 0 0; background: #c4c4d8; box-shadow: 1px 1px 0 #8c8ca4; }
        :host([across]) { width: auto; height: 11px; }
        :host([across]) i { width: 20px; height: 2px; margin-left: 0; border-width: 0 0 1px; }
      </style><i></i>`;
  }
}

class ToolRule extends Part {
  template() {
    return `
      <style>
        :host { display: block; flex: none; height: 2px; width: 41px; margin: 3px 0 4px; border-top: 1px solid #999; background: #fff; }
      </style>`;
  }
}

class ComboBox extends Part {
  template() {
    const kind = this.getAttribute('kind') || '';
    return `
      <style>
        :host { display: grid; flex: none; grid-template: 24px / 1fr 20px; border: 2px solid; border-color: #808088 #fff #fff #808088; background: #fff; }
        select { grid-area: 1 / 1 / 2 / 3; min-width: 0; margin: 0; padding: 0 22px 0 3px; border: 0; border-radius: 0; outline: 0; appearance: none; background: none; font: inherit; color: #111; opacity: 1; }
        .drop { grid-area: 1 / 2; display: grid; place-items: center; border: 1px solid; border-color: #fff #777 #777 #fff; background: #f0f0f0; pointer-events: none; }
        .drop::after { content: ""; border: 5px solid transparent; border-top: 7px solid #000; border-bottom: 0; }
        .preview { grid-area: 1 / 1; align-self: center; pointer-events: none; }
        .swatch { height: 17px; margin: 0 6px 0 5px; border: 1px solid; border-color: #777 #eee #eee #777; }
        .line { height: 4px; margin: 0 4px 0 7px; background: #000; }
        :host([disabled]) { background: #f0f0f0; }
        :host([disabled]) select { color: #888; }
        :host([disabled]) .drop::after { border-top-color: #999; }
      </style>
      <select aria-label="${this.getAttribute('label')}" ${this.hasAttribute('disabled') ? 'disabled' : ''}><option>${this.getAttribute('value') || ''}</option></select>
      ${kind ? `<span class="preview ${kind}"></span>` : ''}
      <span class="drop"></span>`;
  }
}

class TitleBar extends Part {
  template() {
    return `
      <style>
        :host { display: flex; flex: none; align-items: center; height: 29px; padding: 0 3px; background: #fff; font-size: 14px; }
        .app { width: 18px; height: 17px; margin-right: 6px; }
        .space { flex: 1; }
        button { width: 58px; height: 29px; padding: 0; border: 0; background: none; }
        svg { display: block; margin: auto; }
      </style>
      <span class="app">${APP_ICON}</span>
      <span>CATIA V5 - [thor kask.CATPart]</span>
      <span class="space"></span>
      <button aria-label="Minimize"><svg width="12" height="12"><path d="M0 6.500H12" stroke="#000"/></svg></button>
      <button aria-label="Restore"><svg width="12" height="12"><path d="M2.500 2V.5H11.500V9.500H10M.5 2.500H9.500V11.500H.5z" fill="none" stroke="#000"/></svg></button>
      <button aria-label="Close"><svg width="12" height="12"><path d="M0 0L12 12M12 0L0 12" stroke="#000"/></svg></button>`;
  }
}

class MenuBar extends Part {
  template() {
    const items = ['File', 'Edit', 'View', 'Insert', 'Tools', 'Window', 'Help'];
    return `
      <style>
        :host { display: flex; flex: none; align-items: stretch; height: 24px; background: #cfcfe6; font-size: 14px; line-height: 24px; }
        .app { width: 24px; padding: 2px 1px; box-sizing: border-box; }
        a { padding: 0 22px 0 9px; color: #111; text-decoration: none; }
        a.start { margin-left: 1px; background: #fde2b4; }
        a.vpm { padding-right: 11px; }
        u { text-underline-offset: 2px; }
        .space { flex: 1; }
        button { width: 22px; margin: 1px; padding: 0; border: 1px solid #e4e4ea; background: #fff; }
        svg { display: block; margin: auto; }
      </style>
      <span class="app">${APP_ICON}</span>
      <a class="start" href="#"><u>S</u>tart</a>
      <a class="vpm" href="#">ENOVIA V5 VPM</a>
      ${items.map(t => `<a href="#"><u>${t[0]}</u>${t.slice(1)}</a>`).join('')}
      <span class="space"></span>
      <button aria-label="Minimize document"><svg width="12" height="12"><path d="M2 9H10" stroke="#789" stroke-width="2"/></svg></button>
      <button aria-label="Restore document"><svg width="12" height="12"><path d="M4 4V1H11V7H9M1 5H8V11H1zM1 6H8" fill="none" stroke="#789" stroke-width="1.500"/></svg></button>
      <button aria-label="Close document"><svg width="12" height="12"><path d="M2 2L10 10M10 2L2 10" stroke="#678" stroke-width="3"/></svg></button>`;
  }
}

class ToolBar extends Part {
  template() {
    return `
      <style>
        :host { display: flex; flex: none; align-items: flex-start; box-sizing: border-box; height: 48px; padding-top: 6px; border-bottom: 3px solid #55555e; background: linear-gradient(#fff, #fff 2px, #cfcfe6 11px, #cfcfe6 28px, #8c8ca4 44px); }
        :host([low]) { height: 47px; padding-top: 7px; border-bottom-width: 1px; }
      </style><slot></slot>`;
  }
}

class ScrollColumn extends Part {
  template() {
    return `
      <style>
        :host { display: flex; flex: none; flex-direction: column; width: 23px; border-left: 2px solid #a0a0a8; }
        button { display: block; height: 21px; padding: 0; border: 1px solid #5050c0; background: #7878ff; }
        svg { display: block; margin: auto; }
        .track { flex: 220; background: repeating-conic-gradient(#7878f0 0 25%, #44449c 0 50%) 0 0 / 2px 2px; }
        .thumb { flex: 591; border-top: 2px solid #b0b0ff; border-right: 1px solid #4444a8; background: #7878ff; }
      </style>
      <button aria-label="Scroll up"><svg width="14" height="14"><path d="M7 1L13 14H1z"/></svg></button>
      <div class="track"></div><div class="thumb"></div>
      <button aria-label="Scroll down"><svg width="14" height="14"><path d="M7 13L13 0H1z"/></svg></button>`;
  }
}

class ModelView extends Part {
  template() {
    return `
      <style>
        :host { display: block; flex: 1; position: relative; overflow: hidden; background: linear-gradient(#333366, #464674 66%, #a9a9bf); }
        .node { display: flex; align-items: center; height: 16px; padding-left: 3px; color: #fff; font-size: 23px; line-height: 16px; }
        .node svg { flex: none; }
        .node span { margin-left: 10px; }
        .model, .compass, .axes { position: absolute; }
        .model { left: 655px; top: 179px; }
        .compass { left: 1611px; top: 2px; }
        .axes { left: 1765px; top: 760px; }
      </style>
      <div class="node">
        <svg width="70" height="26" viewBox="0 0 70 26">
          <path d="M2 8L8 2H17L23 8V15L16 20H9L2 15z" fill="#888"/><path d="M5 8H20M12 8V16" stroke="#000" stroke-width="5"/>
          <path d="M23 10H33" stroke="#fff" stroke-width="2"/>
          <path d="M44 25H62L64 20H70V12L64 8H50z" fill="#000"/>
          <path d="M36 4H70V10H64L69 14L68 18H60L61 22H50L44 24H38z" fill="#10a0b0"/>
          <path d="M36 6H46L52 14H58L58 20L50 24L38 22L44 14z" fill="#40e8ff"/>
          <path d="M38 8h4v4h-4zM46 5h5v4h-5zM42 14h4v4h-4zM50 15h4v4h-4zM56 8h4v4h-4zM39 19h4v4h-4z" fill="#ff0"/>
        </svg>
        <span>PartBody</span>
      </div>
      <svg class="model" width="430" height="500" viewBox="0 0 1290 1500" fill="none" stroke="#000" stroke-width="5" stroke-linejoin="round">
        <defs>
          <radialGradient id="dome" gradientUnits="userSpaceOnUse" cx="0" cy="0" r="600" gradientTransform="translate(510 590) scale(1 1.450)">
            <stop offset="0" stop-color="#fff"/><stop offset=".1" stop-color="#fff"/><stop offset=".24" stop-color="#ebebeb"/>
            <stop offset=".45" stop-color="#d6d6d6"/><stop offset=".66" stop-color="#b4b4b4"/><stop offset=".86" stop-color="#828282"/><stop offset="1" stop-color="#7e7e7e"/>
          </radialGradient>
          <linearGradient id="wing" x2="0" y2="1"><stop offset="0" stop-color="#b4b4b4"/><stop offset=".3" stop-color="#dcdcdc"/><stop offset=".6" stop-color="#e8e8e8"/><stop offset="1" stop-color="#cfcfcf"/></linearGradient>
        </defs>
        <path d="M770 68L940 105C920 160 925 200 930 250C950 320 990 390 1030 480L1078 570L900 400L785 293C755 265 752 230 750 182C738 160 738 110 770 68z" fill="#f8f8f8"/>
        <path d="M832 82C832 150 840 220 880 312L915 375M750 180Q770 190 843 196M785 293Q820 305 880 312M915 375L995 402"/>
        <path d="M965 900L963 990C965 1020 980 1035 995 1043C993 1090 1005 1120 1025 1140C1020 1230 1030 1300 1090 1325L1190 1347L1215 1170C1160 1080 1143 1020 1143 850z" fill="#ececec"/>
        <path d="M975 910L1065 926M995 1043Q1020 1055 1085 1061M1025 1140Q1050 1154 1113 1155M1065 885C1065 1000 1090 1100 1113 1155L1092 1325M1085 885L1143 912"/>
        <path d="M1143 850C1143 1020 1160 1080 1213 1170L1188 1345" stroke-width="11"/>
        <path d="M1113 1155L1215 1175" stroke-width="9"/>
        <path d="M290 343C350 285 450 232 540 231C700 235 850 310 930 380C1060 480 1145 650 1143 855C1120 880 1060 900 965 908C850 916 700 916 555 907L450 750L280 350z" fill="url(#dome)" stroke="none"/>
        <path d="M936 105C920 160 925 200 930 250C950 320 990 390 1025 465" stroke-width="11"/>
        <path d="M1022 458C1045 505 1060 530 1078 572" stroke-width="7"/>
        <path d="M290 343C350 285 450 232 540 231C580 231 620 238 650 246M1078 565C1125 670 1145 760 1143 855C1120 880 1060 900 965 908C850 916 700 916 555 907" stroke-width="6"/>
        <path d="M55 182L222 215C260 290 300 360 385 480C470 580 530 720 548 880V1060C555 1140 590 1200 632 1262L643 1430L545 1410C490 1390 450 1310 447 1235C420 1215 408 1170 407 1137C380 1120 370 1080 373 1000C345 970 350 900 368 862C335 840 333 790 335 720C310 690 305 650 308 597C270 560 250 520 245 487C215 470 190 430 173 390C140 365 120 330 103 287C75 265 58 230 55 182z" fill="url(#wing)" stroke-width="6"/>
        <path d="M103 287Q140 297 180 295M173 390Q200 401 262 404M245 487Q270 500 345 504M308 597Q340 615 413 619M335 720Q360 742 457 745M368 862Q400 877 470 881M373 1000Q400 1013 470 1017M407 1137Q430 1149 490 1152M447 1235Q470 1243 530 1245"/>
        <path d="M118 200C160 280 240 390 330 485C400 570 470 740 473 880C474 1000 455 1100 530 1245L543 1410M320 472L395 495M440 682L505 717M475 970L545 1002M55 182L222 215"/>
        <path d="M222 215C260 290 300 360 385 480C470 580 530 720 548 880V1060C555 1140 590 1200 630 1262L640 1430" stroke-width="14"/>
        <path d="M222 217C260 290 300 360 385 480C470 580 530 720 548 880M550 1100C560 1150 590 1200 628 1258" stroke="#888" stroke-width="3"/>
        <path d="M55 182L222 215M530 1245L632 1266" stroke-width="10"/>
      </svg>
      <svg class="compass" width="200" height="180" viewBox="0 0 200 180" fill="none" stroke="#dcc8ff" stroke-width="2">
        <path d="M5 94C10 60 40 38 84 34V97L5 82z" fill="#16165a"/>
        <path d="M40 62C50 42 68 33 84 34C62 42 48 58 41 80z" fill="#1c4a64"/>
        <path d="M20 103L84 98L20 82"/>
        <path d="M20 150Q70 135 130 155Q70 172 20 155z" fill="#1c4a64"/>
        <path d="M86 18L84 98L81 146"/>
        <circle cx="86" cy="16" r="4" fill="#dcc8ff" stroke="none"/>
        <path d="M76 147h11v11h-11z" fill="#d80000" stroke="none"/>
        <text x="66" y="16" fill="#e8d800" stroke="none" font-family="DejaVu Sans" font-size="14">z</text>
      </svg>
      <svg class="axes" width="60" height="60" viewBox="0 0 60 60" fill="none" stroke="#fff">
        <path d="M34 17V49L12 43M34 49L12 51M14 42V52M10 44L14 48L10 52"/>
        <g fill="#fff" stroke="none" font-family="DejaVu Sans" font-size="12"><text x="34" y="17">z</text><text x="8" y="40">x</text><text x="8" y="55">y</text></g>
      </svg>`;
  }
}

class SideStrip extends Part {
  template() {
    return `
      <style>
        :host { display: flex; flex: none; flex-direction: column; box-sizing: border-box; width: 47px; padding: 25px 0 14px 7px; background: linear-gradient(90deg, #fff, #fff 2px, #cfcfe6 8px, #cfcfe6 38px, #a8a8be); }
        .gap { height: 12px; }
        .space { flex: 1; }
      </style>
      <tool-handle across></tool-handle>${tools('robot')}<div class="gap"></div>
      <tool-handle across></tool-handle>${tools('pcs')}<div class="gap"></div>
      <tool-handle across></tool-handle>${tools('geara! gearb! gearc! geard!')}
      <div class="space"></div>${tools('curve')}`;
  }
}

class StatusBar extends Part {
  template() {
    return `
      <style>
        :host { display: flex; flex: none; align-items: center; gap: 3px; height: 30px; padding: 0 1px 0 4px; background: #cfcfe6; font-size: 14px; }
        span { flex: 1; }
        input { box-sizing: border-box; width: 372px; height: 24px; border: 2px solid; border-color: #808088 #fff #fff #808088; background: #fff; }
        button { display: grid; place-items: center; box-sizing: border-box; width: 40px; height: 26px; padding: 0; border: 2px solid; border-color: #fff #808088 #808088 #fff; background: #cfcfe6; }
      </style>
      <span>Select an object or a command</span>
      <input type="text" aria-label="Power input">
      <button aria-label="Dialog">${svg('screen', 22)}</button>
      <button aria-label="Information">${svg('info', 22)}</button>`;
  }
}

class ToolWindow extends Part {
  template() {
    return `
      <style>
        :host { display: flex; flex-direction: column; position: absolute; width: 45px; box-sizing: border-box; border-top: 1px solid #1e80d0; background: #fff; box-shadow: 1px 3px 10px #0006; }
        header { display: flex; flex: none; align-items: center; height: 38px; padding: 0 1px 0 10px; font-size: 14px; }
        header span { flex: 1; min-width: 0; margin-top: -2px; overflow: hidden; white-space: nowrap; }
        header button { flex: none; display: grid; place-items: center; width: 25px; height: 25px; margin-top: 3px; padding: 0; border: 0; background: #c75050; }
        .body { display: flex; flex-direction: column; flex: 1; padding: 5px 0 3px 4px; background: linear-gradient(90deg, #f6f6fc, #cfcfe6 10px, #cfcfe6 calc(100% - 14px), #9c9cb2); }
        .grip { flex: none; width: 20px; height: 2px; margin: 0 0 8px; border-bottom: 1px solid #fff; background: #bbbbd0; box-shadow: 1px 1px 0 #9090a4; }
        :host([slim]) { width: 43px; }
        :host([slim]) .body { padding-bottom: 0; }
        :host([flat]) { width: max-content; }
        :host([flat]) .body { flex-direction: row; align-items: flex-start; padding: 4px 3px 3px 5px; background: linear-gradient(#f6f6fc, #cfcfe6 10px, #cfcfe6 28px, #9c9cb2); border-bottom: 1px solid #777; }
        :host([flat]) .grip { width: 2px; height: 20px; margin: 0 8px 0 0; }
        :host([active]) { bottom: 0; width: 63px; padding: 0 9px; border: 1px solid #333; background: linear-gradient(#9ab6d2, #bcd4ec 60px); }
        :host([active]) header { padding: 0 3px 0 0; }
        :host([active]) header span { margin-top: 6px; }
        :host([active]) header button { width: 20px; height: 20px; margin-top: 6px; }
      </style>
      <header><span>${this.getAttribute('caption')}</span>
        <button aria-label="Close"><svg width="8" height="8"><path d="M1 1L7 7M7 1L1 7" stroke="#fff" stroke-width="2"/></svg></button>
      </header>
      <div class="body"><div class="grip"></div><slot></slot></div>`;
  }
}

class TaskBar extends Part {
  template() {
    return `
      <style>
        :host { display: flex; flex: none; position: relative; height: 50px; background: #010409dd; color: #fff; }
        button { display: grid; place-items: center; position: relative; box-sizing: border-box; width: 62px; height: 50px; padding: 0; border: 0; border-bottom: 3px solid transparent; background: none; }
        .system { width: 60px; }
        .pinned { display: flex; margin-left: 3px; }
        .running { background: linear-gradient(#76b9ed, #76b9ed) 50% 100% / 51px 3px no-repeat border-box; }
        .current { border-bottom-color: #76b9ed; background: #36373b; }
        .current span { width: 27px; height: 27px; border: 1px solid #fff; }
        .space { flex: 1; }
        .badge { position: absolute; width: 18px; height: 18px; border: 1px solid #aaa; border-radius: 50%; background: #333; font-size: 14px; line-height: 18px; text-align: center; color: #fff; }
        .mail .badge { right: 6px; bottom: 1px; }
        .notes .badge { right: 10px; bottom: 1px; }
        .tray { width: 36px; }
        time { display: block; width: 78px; padding-top: 2px; text-align: center; font-size: 14px; line-height: 23px; }
        .notes { width: 57px; }
        .peek { width: 4px; margin-left: 7px; border-left: 1px solid #555; }
      </style>
      <button class="system" aria-label="Start"><svg width="20" height="20" fill="#fff"><path d="M0 3L8 2V9H0zM9 2L20 0V9H9zM0 10H8V18L0 17zM9 10H20V20L9 18z"/></svg></button>
      <button class="system" aria-label="Search"><svg width="22" height="22" fill="none" stroke="#fff" stroke-width="1.500"><circle cx="13" cy="8" r="6.500"/><path d="M9 13L1 21"/></svg></button>
      <button class="system" aria-label="Task view"><svg width="26" height="20" fill="none" stroke="#fff" stroke-width="1.500"><path d="M5 1H20V19H5zM3 4H1V16H3M22 4H24V16H22"/></svg></button>
      <div class="pinned">
        <button aria-label="Store"><svg width="28" height="30"><path d="M6 8C6 0 15 0 16 7M10 6C11 0 19 0 19 6" fill="none" stroke="#fff" stroke-width="1.500"/><path d="M1 8L27 5V30L1 27z" fill="#fff"/><path d="M6 13L12 12V17H6zM13 12L20 11V17H13zM6 18H12V23L6 22zM13 18H20V24L13 23z" fill="#05070c"/></svg></button>
        <button aria-label="Edge"><svg width="26" height="28"><path d="M1 12C2 -1 24 -4 25 14V17H9C9 25 19 25 23 22V26C12 31 2 26 3 16C4 11 8 9 11 8C9 10 9 11 9 12H18C18 3 6 4 1 12z" fill="#0a84e0"/></svg></button>
        <button aria-label="File Explorer"><svg width="28" height="26"><path d="M0 2H11L13 4H28V24H0z" fill="#f8d46a"/><path d="M0 7H28V24H0z" fill="#ffe79a"/><path d="M5 24V15Q5 13 7 13H21Q23 13 23 15V24H18V18H10V24z" fill="#36b0e8"/></svg></button>
        <button class="mail" aria-label="Mail"><svg width="30" height="26"><path d="M0 10L15 0L30 10V26H0z" fill="#fff"/><path d="M2 9H28L15 17z" fill="#05070c"/></svg><span class="badge">5</span></button>
        <button class="running" aria-label="Chrome"><svg width="28" height="28"><circle cx="14" cy="14" r="13.500" fill="#f8cc30"/><path d="M14 14L2 8A13.500 13.500 0 0 1 26 8H14z" fill="#e04030"/><path d="M2 8L9 18L14 20L11 27A13.500 13.500 0 0 1 2 8z" fill="#30a050"/><circle cx="14" cy="14" r="6.500" fill="#fff"/><circle cx="14" cy="14" r="5" fill="#4285f4"/></svg></button>
        <button class="current" aria-label="CATIA V5"><span>${APP_ICON}</span></button>
      </div>
      <span class="space"></span>
      <button class="tray" aria-label="Hidden icons"><svg width="18" height="12" fill="none" stroke="#fff" stroke-width="1.500"><path d="M1 10L9 2L17 10"/></svg></button>
      <time>10:37 PM<br>10/12/2017</time>
      <button class="notes" aria-label="Notifications"><svg width="20" height="20"><path d="M0 0H20V16H11L6 20V16H0z" fill="#fff"/><path d="M4 4H16M4 8H16M4 12H12" stroke="#111"/></svg><span class="badge">1</span></button>
      <span class="peek"></span>`;
  }
}

class CadApp extends Part {
  template() {
    return `
      <style>
        :host { display: flex; flex-direction: column; position: relative; height: 100vh; overflow: hidden; isolation: isolate; }
        .work { display: flex; flex: 1; min-height: 0; }
        .first { margin-left: -3px; }
        [low] .first { margin-left: -8px; }
        .first ~ .wide { margin-left: 6px; }
        combo-box { margin: 4px 5px 0 0; }
        .w1 { width: 75px; }
        .w2 { width: 47px; }
        .w3 { width: 88px; margin-right: 0; }
        .w4 { width: 201px; margin-right: 0; margin-left: 3px; }
        combo-box.last { margin-right: 0; }
        .more { flex: 1; padding-right: 10px; text-align: right; font-size: 23px; line-height: 20px; color: #999; }
        .logo { flex: none; width: 58px; height: 40px; }
        .windows { position: absolute; inset: 0; overflow: hidden; pointer-events: none; }
        .windows > * { pointer-events: auto; }
        .watermark { position: absolute; right: 80px; bottom: 98px; width: 354px; color: #90909080; font-size: 17px; line-height: 24px; white-space: nowrap; pointer-events: none; }
        .watermark p { margin: 0; }
        .watermark .head { font-size: 23px; line-height: 32px; }
        task-bar { z-index: 1; }
      </style>
      <title-bar></title-bar>
      <menu-bar></menu-bar>
      <tool-bar>
        <tool-handle class="first"></tool-handle>
        <combo-box class="w1" label="Fill colour" kind="swatch"></combo-box>
        <combo-box class="w1" label="Transparency" value="Auto"></combo-box>
        <combo-box class="w1" label="Line type" kind="line"></combo-box>
        <combo-box class="w1" label="Line weight" value="Auto"></combo-box>
        <combo-box class="w2" label="Point symbol" value="Auto"></combo-box>
        <combo-box class="w2" label="Rendering" value="Auto" disabled></combo-box>
        <combo-box class="w1 last" label="Layer" value="None"></combo-box>
        ${tools('brush wand | move turn axisno plus minus equal ruler lensno ruler | user props! docgraph help! docq! | folder')}
        <combo-box class="w3" label="Catalog" value="File" disabled></combo-box>
        ${tools('| mail')}
      </tool-bar>
      <div class="work">
        <scroll-column></scroll-column>
        <model-view></model-view>
        <side-strip></side-strip>
      </div>
      <tool-bar low>
        <tool-handle class="first"></tool-handle>
        ${tools('new folder save print cut! copy! paste undo> redo!> what')}
        <tool-handle class="wide"></tool-handle>
        ${tools('update! hand axis tree grid> plane> block bolt eye! treeleft body> stack sheets>')}
        <combo-box class="w4" label="In work object" value="Geometrical Set.1"></combo-box>
        ${tools('| fx talk knot!~ table> relate lock> equiv | fly fit pan spin zoomin zoomout normal quad iso> cyl quad picture |')}
        <span class="more">»</span>
        <svg class="logo" viewBox="0 0 58 40" aria-label="CATIA">
          <path d="M14 2Q24 0 25 4Q23 8 16 11" fill="none" stroke="#e03030" stroke-width="3"/>
          <path d="M6 11Q17 12 15 18Q12 25 2 25L7 15" fill="none" stroke="#503090" stroke-width="3"/>
          <path d="M33 9Q22 9 24 14Q31 19 28 23Q24 27 18 26" fill="none" stroke="#f0a020" stroke-width="3"/>
          <text x="8" y="38" font-family="Liberation Sans" font-size="13" font-weight="bold" font-style="italic" fill="#503090">CATIA</text>
        </svg>
      </tool-bar>
      <status-bar></status-bar>
      <task-bar></task-bar>
      <div class="windows">
        <tool-window flat caption="ENOVIA V5 VPM" style="left:954px;top:139px">${tools('propson help! docmgr! docset! gears!')}</tool-window>
        <tool-window caption="R" style="left:1671px;top:286px">${tools('points> pattern> catalog mould> factory>')}</tool-window>
        <tool-window caption="W" style="left:1634px;top:121px">${tools('pt> line> points> - sweep> trimsurf loftsurf> - circle> spline>')}</tool-window>
        <tool-window slim caption="C" style="left:1471px;top:568px">${tools('cube-iso cube-front cube-back cube-left cube-right cube-top cube-bottom views')}</tool-window>
        <tool-window caption="" style="left:1529px;top:736px">${tools('starsurf boxsurf sketchpad> yellowsurf facet')}</tool-window>
        <tool-window caption="V" style="left:1536px;top:319px">${tools('pad shaft rib stiff thick closesurf - draft> shell thickness mirror - bool>')}</tool-window>
        <tool-window slim caption="A" style="left:1779px;top:731px">${tools('analyse')}</tool-window>
        <tool-window caption="S" style="left:1749px;top:476px">${tools('extrude> offset> sweep2> fill multi blend')}</tool-window>
        <tool-window caption="C" style="left:1685px;top:603px">${tools('puzzle> saw> edge> dome>')}</tool-window>
        <tool-window active caption="V.." style="left:1683px;top:779px">${tools('cyl cyledge cyltop cylmat cylmesh cylwire cylask')}</tool-window>
        <tool-window flat caption="Sketch..." style="left:1839px;top:818px">${tools('sketch sketchpos')}</tool-window>
      </div>
      <div class="watermark"><p class="head">Windows'u Etkinleştir</p><p>Windows'u etkinleştirmek için Ayarlar'a gidin.</p></div>`;
  }
}

const parts = {
  'tool-button': ToolButton, 'tool-handle': ToolHandle, 'tool-rule': ToolRule, 'combo-box': ComboBox,
  'title-bar': TitleBar, 'menu-bar': MenuBar, 'tool-bar': ToolBar, 'scroll-column': ScrollColumn,
  'model-view': ModelView, 'side-strip': SideStrip, 'status-bar': StatusBar, 'tool-window': ToolWindow,
  'task-bar': TaskBar, 'cad-app': CadApp,
};
for (const [name, part] of Object.entries(parts)) customElements.define(name, part);
</script>
</body>
</html>
